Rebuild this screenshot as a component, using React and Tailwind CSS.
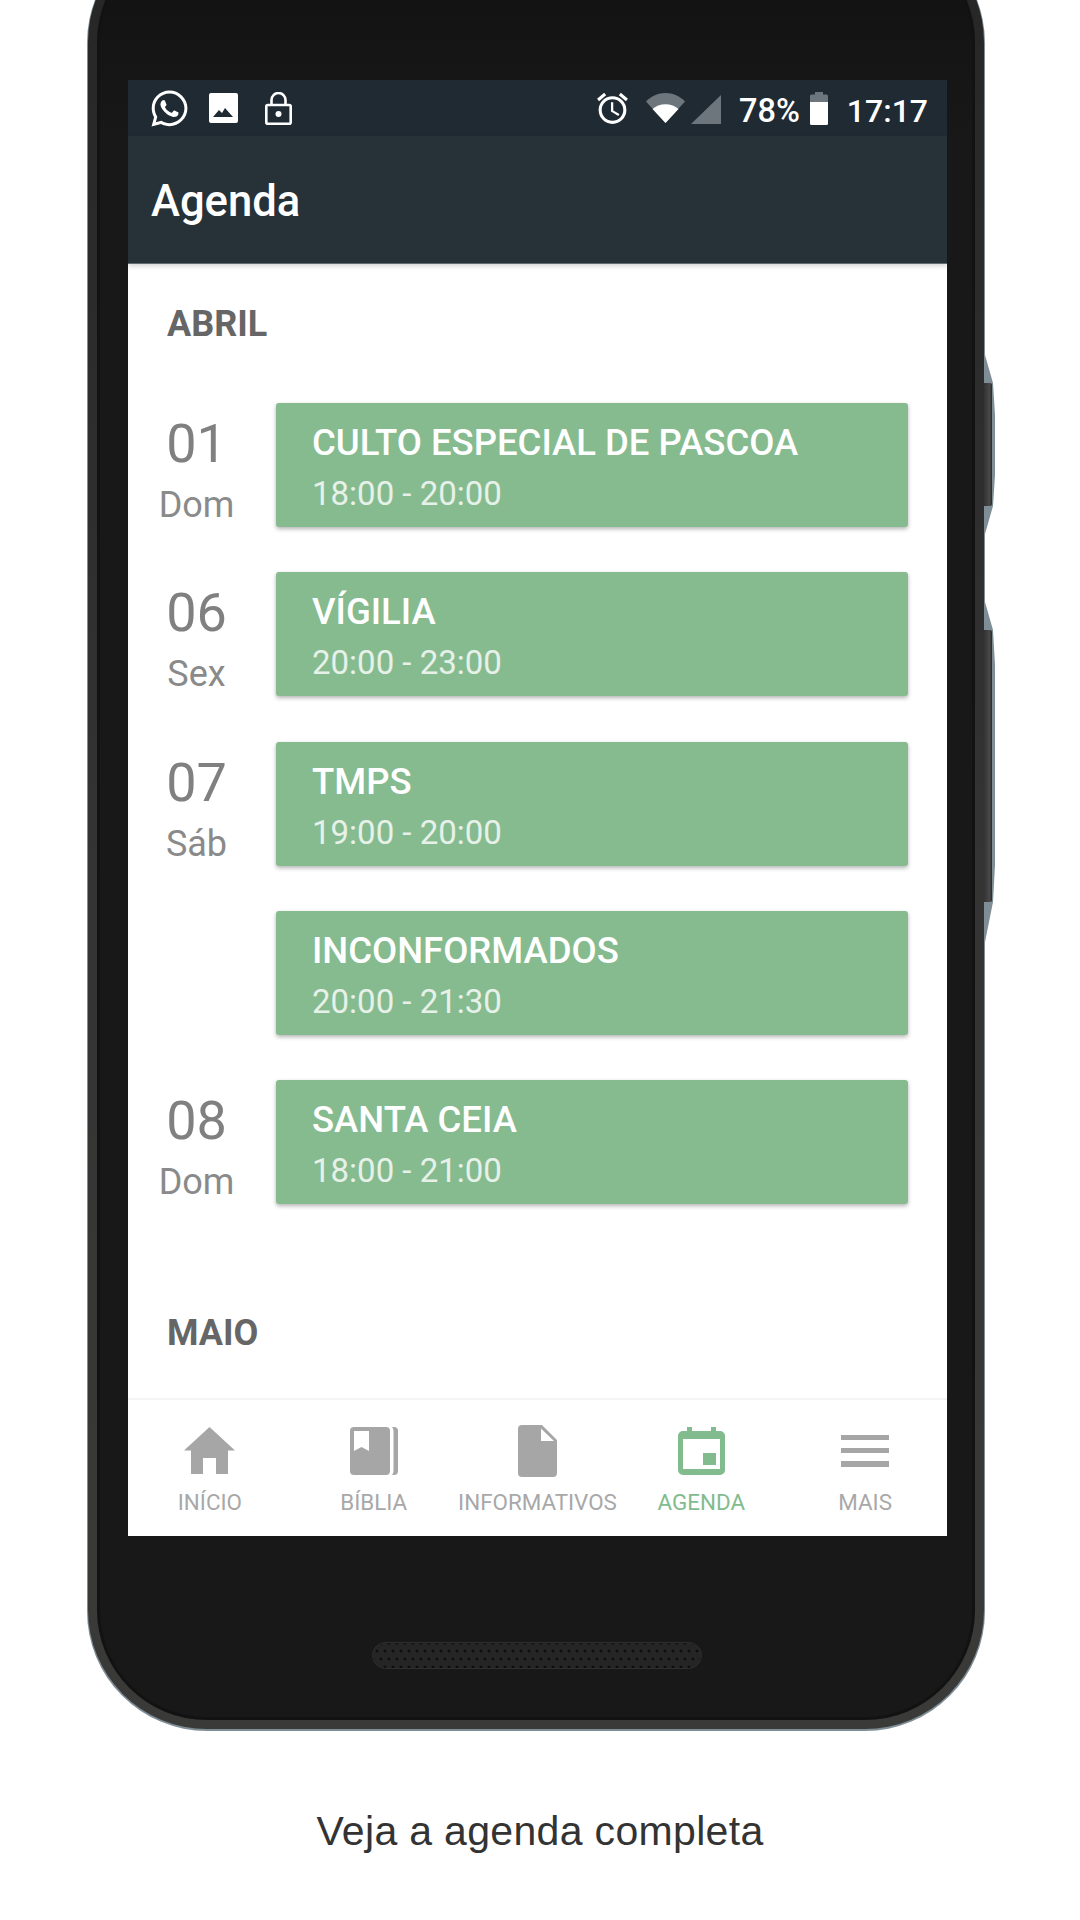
import React from "react";
import { FaWhatsapp } from "react-icons/fa";
import { MdAccessAlarm } from "react-icons/md";

const months = [
  { d: "01", w: "Dom", t: "CULTO ESPECIAL DE PASCOA", h: "18:00 - 20:00" },
  { d: "06", w: "Sex", t: "VÍGILIA", h: "20:00 - 23:00" },
  { d: "07", w: "Sáb", t: "TMPS", h: "19:00 - 20:00" },
  { d: "", w: "", t: "INCONFORMADOS", h: "20:00 - 21:30" },
  { d: "08", w: "Dom", t: "SANTA CEIA", h: "18:00 - 21:00" },
];

function ImageIcon() {
  return (
    <svg width="29" height="30" viewBox="0 0 29 30" className="block">
      <rect width="29" height="30" rx="2" fill="#fff" />
      <path d="M4 24l6-7 3 3 3-5 8 9z" fill="#1f2a33" />
    </svg>
  );
}
function LockIcon() {
  return (
    <svg width="27" height="33" viewBox="0 0 27 33" className="block" fill="none" stroke="#fff" strokeWidth="2.6">
      <rect x="1.3" y="13" width="24.4" height="18.7" rx="1.5" />
      <path d="M6.5 13V8a7 7 0 0 1 14 0v5" />
      <circle cx="13.5" cy="22" r="3" fill="#fff" stroke="none" />
    </svg>
  );
}
function WifiIcon() {
  return (
    <svg width="39" height="30" viewBox="0 0 39 30" className="block">
      <path d="M0 8.500C5 3.200 12 0 19.500 0S34 3.200 39 8.500L19.500 30z" fill="#6d767c" />
      <path d="M6.500 16C10 13 14.500 11.200 19.500 11.200S29 13 32.500 16L19.500 30z" fill="#fff" />
    </svg>
  );
}
function SignalIcon() {
  return (
    <svg width="30" height="29" viewBox="0 0 30 29" className="block">
      <path d="M30 0v29H0z" fill="#6d767c" />
    </svg>
  );
}
function BatteryIcon() {
  return (
    <svg width="18" height="33" viewBox="0 0 18 33" className="block">
      <path d="M5 0h8v2.500h3.500a1.500 1.500 0 0 1 1.500 1.500V10H0V4a1.500 1.500 0 0 1 1.500-1.500H5z" fill="#6d767c" />
      <path d="M0 10h18v21.500a1.500 1.500 0 0 1-1.500 1.500h-15A1.500 1.500 0 0 1 0 31.500z" fill="#fff" />
    </svg>
  );
}
function HomeIcon({ c }) {
  return (
    <svg width="51" height="48" viewBox="0 0 51 48" className="block">
      <path d="M25.500 0L51 23.500h-7V47H32V31H19v16H7V23.500H0z" fill={c} />
    </svg>
  );
}
function BookIcon({ c }) {
  return (
    <svg width="48" height="48" viewBox="0 0 48 48" className="block">
      <path fillRule="evenodd" d="M4 0h32a4 4 0 0 1 4 4v40a4 4 0 0 1-4 4H4a4 4 0 0 1-4-4V4a4 4 0 0 1 4-4zM4 4v20l7.500-4 7.500 4V4z" fill={c} />
      <path d="M42 0h2a4 4 0 0 1 4 4v40a4 4 0 0 1-4 4h-2a6 6 0 0 0 1.500-4V4A6 6 0 0 0 42 0z" fill={c} />
    </svg>
  );
}
function FileIcon({ c }) {
  return (
    <svg width="39" height="52" viewBox="0 0 39 52" className="block">
      <path fillRule="evenodd" d="M4 0h20l15 15v33a4 4 0 0 1-4 4H4a4 4 0 0 1-4-4V4a4 4 0 0 1 4-4zM23 3.500V16h13z" fill={c} />
    </svg>
  );
}
function CalendarIcon({ c }) {
  return (
    <svg width="47" height="48" viewBox="0 0 47 48" className="block">
      <path fillRule="evenodd" d="M9 0h5v4h19V0h5v4h4a5 5 0 0 1 5 5v34a5 5 0 0 1-5 5H5a5 5 0 0 1-5-5V9a5 5 0 0 1 5-5h4zM5 12v30h37V12z" fill={c} />
      <rect x="25" y="26" width="13" height="12" fill={c} />
    </svg>
  );
}
function MenuIcon({ c }) {
  return (
    <svg width="48" height="32" viewBox="0 0 48 32" className="block">
      <rect width="48" height="5" fill={c} />
      <rect y="13" width="48" height="5" fill={c} />
      <rect y="26" width="48" height="6" fill={c} />
    </svg>
  );
}

function NavItem({ Icon, label, active }) {
  const c = active ? "#82bb8e" : "#a6a6a6";
  return (
    <div className="w-[164px] flex flex-col items-center">
      <div className="h-[52px] flex items-center justify-center"><Icon c={c} /></div>
      <div className={active ? "mt-[10px] text-[22.400px] leading-[30px] text-[#82bb8e] whitespace-nowrap" : "mt-[10px] text-[22.400px] leading-[30px] text-[#a8a8a8] whitespace-nowrap"}>{label}</div>
    </div>
  );
}

function Row({ e }) {
  return (
    <div className="flex">
      <div className="w-[137px] mr-[11px] pt-[11px] text-center">
        {e.d && <div className="text-[54px] leading-[60px] text-[#808080]">{e.d}</div>}
        {e.w && <div className="mt-[11px] text-[36px] leading-[40px] text-[#8a8a8a]">{e.w}</div>}
      </div>
      <div className="w-[632px] h-[124px] rounded-[3px] bg-[#85bb8f] pl-[36px] pt-[18px] shadow-[0_2px_4px_rgba(0,0,0,0.3)]">
        <div className="text-[36.500px] leading-[44px] font-medium text-white whitespace-nowrap">{e.t}</div>
        <div className="mt-[7px] text-[33px] leading-[44px] text-white/80 whitespace-nowrap">{e.h}</div>
      </div>
    </div>
  );
}

export default function App() {
  return (
    <div className="relative w-[1080px] h-[1920px] overflow-hidden bg-white font-['Roboto',sans-serif]">
      <div className="relative ml-[87px] -mt-[77px] w-[898px] h-[1808px] rounded-[120px] bg-[#7f8d96] pt-0 px-px pb-[2px]">
        <svg className="absolute left-[896px] top-[432px]" width="12" height="587" viewBox="0 0 12 587">
          <path d="M2 0L10 28L12 60L12 120L10 151L2 179zM2 247L10 275L12 310L12 510L10 547L2 587z" fill="#7f8d96" />
        </svg>
        <div className="absolute left-[897px] top-[460px] w-[8px] h-[123px] rounded-r-[2px] bg-[linear-gradient(90deg,#333,#4a484a_70%,#2a282a)]" />
        <div className="absolute left-[897px] top-[707px] w-[8px] h-[272px] rounded-r-[2px] bg-[linear-gradient(90deg,#333,#4a484a_70%,#2a282a)]" />
        <div className="relative w-[896px] h-[1806px] rounded-[119px] bg-[linear-gradient(180deg,#262626,#333333_50%,#3a3a38)] p-[9px]">
          <div className="w-[878px] h-[1788px] rounded-[110px] bg-[#121212] p-[3px]">
            <div className="w-[872px] h-[1782px] rounded-[107px] bg-[linear-gradient(180deg,#111,#181818_12%)] pl-[28px] pt-[145px]">
              <div className="w-[819px] h-[1456px] bg-white flex flex-col overflow-hidden">
                <div className="h-[56px] shrink-0 bg-[#1f2a33] pl-[23px] pr-[19px] flex items-center justify-between">
                  <div className="flex items-center">
                    <FaWhatsapp className="text-white -ml-[2.500px]" size={41} />
                    <div className="ml-[19.500px]"><ImageIcon /></div>
                    <div className="ml-[27px]"><LockIcon /></div>
                  </div>
                  <div className="flex items-center text-white font-medium text-[32px]">
                    <MdAccessAlarm className="text-white" size={37} />
                    <div className="ml-[15px]"><WifiIcon /></div>
                    <div className="ml-[6px] pt-[3px]"><SignalIcon /></div>
                    <div className="ml-[18px] pt-[5px] text-[32.500px] leading-[40px]">78%</div>
                    <div className="ml-[10px]"><BatteryIcon /></div>
                    <div className="ml-[19px] pt-[5px] leading-[40px]">17:17</div>
                  </div>
                </div>
                <div className="relative h-[127px] shrink-0 bg-[#263238] pl-[23px] pt-[5px] flex items-center shadow-[0_1px_0_#5d6b73,0_3px_5px_rgba(0,0,0,0.18)]">
                  <div className="text-[43.600px] font-medium text-white">Agenda</div>
                </div>
                <div className="flex-1 overflow-hidden">
                  <div className="pt-[41px] pl-[39px] text-[36px] leading-[40px] font-bold text-[#666]">ABRIL</div>
                  <div className="mt-[59px] flex flex-col gap-[45.300px]">
                    {months.map((e, i) => <Row key={i} e={e} />)}
                  </div>
                  <div className="mt-[109px] pl-[39px] text-[36px] leading-[40px] font-bold text-[#666]">MAIO</div>
                </div>
                <div className="h-[138px] shrink-0 border-t-2 border-[#f4f4f4] flex pt-[25px] bg-white">
                  <NavItem Icon={HomeIcon} label="INÍCIO" />
                  <NavItem Icon={BookIcon} label="BÍBLIA" />
                  <NavItem Icon={FileIcon} label="INFORMATIVOS" />
                  <NavItem Icon={CalendarIcon} label="AGENDA" active />
                  <NavItem Icon={MenuIcon} label="MAIS" />
                </div>
              </div>
              <div className="mt-[106px] ml-[244px] w-[330px] h-[27px] rounded-full bg-[#252525] border border-[#2e2e2e] [background-image:radial-gradient(circle,#0e0e0e_1.3px,transparent_1.7px),radial-gradient(circle,#0e0e0e_1.3px,transparent_1.7px)] [background-size:8px_16px] [background-position:0_0,4px_8px]" />
            </div>
          </div>
        </div>
      </div>
      <div className="mt-[75px] text-center font-['Liberation_Sans',sans-serif] text-[41px] tracking-[0.33px] leading-[50px] text-[#333]">Veja a agenda completa</div>
    </div>
  );
}
